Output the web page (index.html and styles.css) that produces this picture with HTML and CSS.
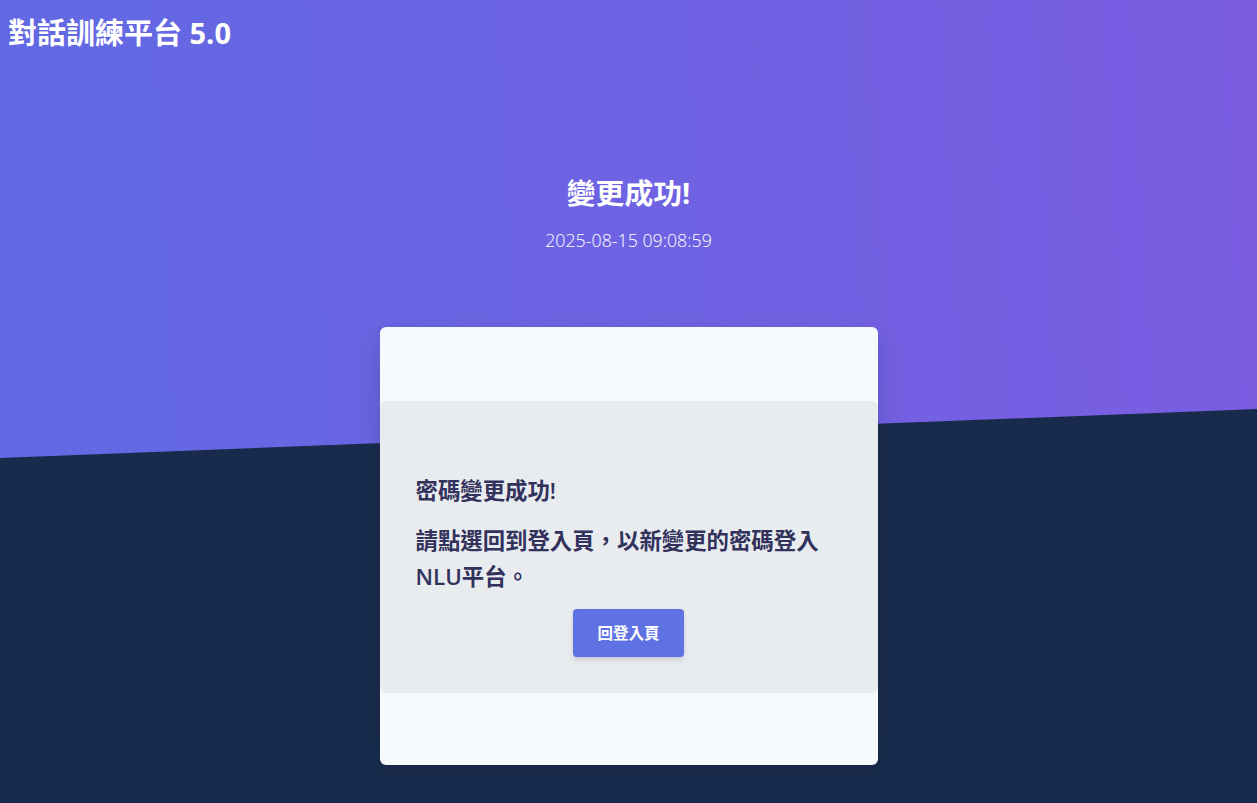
FILE: index.html
```html
<!DOCTYPE html>
<html lang="zh-Hant">
<head>
<meta charset="utf-8">
<title>對話訓練平台 5.0</title>
<link rel="stylesheet" href="styles.css">
</head>
<body>
<header class="hero">
  <div class="brand">對話訓練平台 5.0</div>
  <div class="hero-text">
    <h1 class="hero-title">變更成功!</h1>
    <p class="hero-date">2025-08-15 09:08:59</p>
  </div>
</header>
<main class="main">
  <section class="card">
    <div class="card-body">
      <p class="msg">密碼變更成功!</p>
      <p class="msg">請點選回到登入頁，以新變更的密碼登入NLU平台。</p>
      <div class="actions">
        <button class="btn" type="button">回登入頁</button>
      </div>
    </div>
  </section>
</main>
</body>
</html>
```
FILE: styles.css
```css
html, body {
  margin: 0;
  padding: 0;
}
body {
  background: #182b4c;
  font-family: "Open Sans", "Noto Sans CJK TC", sans-serif;
  min-height: 803px;
  overflow: hidden;
}
.hero {
  height: 458px;
  box-sizing: border-box;
  padding: 16px 8px 0;
  background: linear-gradient(87deg, #6169e3 0%, #7b5de2 100%);
  clip-path: polygon(0 0, 100% 0, 100% 409px, 0 458px);
  color: #fff;
}
.brand {
  font-size: 29px;
  font-weight: 700;
  line-height: 1.2;
}
.hero-text {
  margin-top: 125px;
  text-align: center;
}
.hero-title {
  margin: 0;
  font-size: 28.8px;
  font-weight: 700;
  line-height: 1.2;
}
.hero-date {
  margin: 17px 0 0;
  font-size: 17.8px;
  font-weight: 300;
  line-height: 1.5;
  color: #fff;
}
.main {
  position: relative;
  z-index: 1;
  display: flex;
  justify-content: center;
  margin-top: -131px;
}
.card {
  width: 498px;
  box-sizing: border-box;
  padding: 74px 0 72px;
  background: #f7fafc;
  border-radius: 6px;
  box-shadow: 0 15px 35px rgba(50, 50, 93, 0.12), 0 5px 15px rgba(0, 0, 0, 0.08);
}
.card-body {
  background: #e9ecef;
  border-radius: 6px;
  padding: 72px 36px 36px;
}
.msg {
  margin: 0 0 14px;
  font-size: 22.4px;
  font-weight: 600;
  line-height: 1.6;
  color: #32325d;
}
.actions {
  display: flex;
  justify-content: center;
}
.btn {
  height: 48px;
  padding: 0 24px;
  border: 0;
  border-radius: 4px;
  background: #5e72e4;
  color: #fff;
  font-family: "Open Sans", "Noto Sans CJK TC", sans-serif;
  font-size: 15.5px;
  font-weight: 700;
  box-shadow: 0 4px 6px rgba(50, 50, 93, 0.11), 0 1px 3px rgba(0, 0, 0, 0.08);
  cursor: pointer;
}
```
